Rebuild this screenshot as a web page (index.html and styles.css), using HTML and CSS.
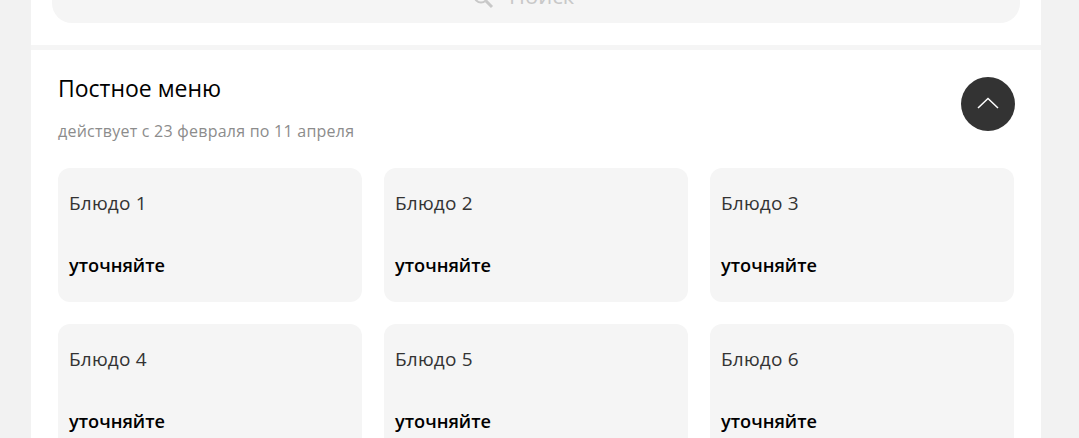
FILE: index.html
```html
<!DOCTYPE html>
<html lang="ru">
<head>
<meta charset="utf-8">
<title>Постное меню</title>
<link rel="stylesheet" href="styles.css">
</head>
<body>
<main class="page">
  <section class="search-panel">
    <div class="search">
      <svg class="search-icon" viewBox="0 0 22 22" width="22" height="22"><circle cx="9" cy="9" r="6.5" fill="none" stroke="#c8c8c8" stroke-width="2"/><path d="M14 14l6 6" stroke="#c8c8c8" stroke-width="3" fill="none"/></svg>
      <span class="search-text">Поиск</span>
    </div>
  </section>
  <section class="menu">
    <header class="menu-head">
      <div>
        <h2 class="menu-title">Постное меню</h2>
        <p class="menu-sub">действует с 23 февраля по 11 апреля</p>
      </div>
      <button class="toggle" type="button" aria-label="Свернуть">
        <svg viewBox="0 0 22 12" width="22" height="12"><path d="M1 11L11 1.5 21 11" fill="none" stroke="#fff" stroke-width="1.5"/></svg>
      </button>
    </header>
    <div class="grid">
      <article class="card"><div class="dish">Блюдо 1</div><div class="price">уточняйте</div></article>
      <article class="card"><div class="dish">Блюдо 2</div><div class="price">уточняйте</div></article>
      <article class="card"><div class="dish">Блюдо 3</div><div class="price">уточняйте</div></article>
      <article class="card"><div class="dish">Блюдо 4</div><div class="price">уточняйте</div></article>
      <article class="card"><div class="dish">Блюдо 5</div><div class="price">уточняйте</div></article>
      <article class="card"><div class="dish">Блюдо 6</div><div class="price">уточняйте</div></article>
    </div>
  </section>
</main>
</body>
</html>
```
FILE: styles.css
```css
* { box-sizing: border-box; }
html, body { margin: 0; height: 438px; overflow: hidden; }
body { background: #f2f2f2; font-family: "Open Sans", "Noto Sans", sans-serif; }
.page { width: 1010px; margin: 0 0 0 31px; background: #fff; height: 438px; overflow: hidden; }
.search-panel { height: 50px; padding: 0 21px; border-bottom: 5px solid #f5f5f5; }
.search { height: 23px; background: #f5f5f5; border-radius: 0 0 20px 20px; display: flex; justify-content: center; align-items: flex-end; gap: 15px; overflow: hidden; padding: 0 26px 15px 0; }
.search-icon { flex: none; margin-bottom: -1px; }
.search-text { font-size: 22px; line-height: 27px; color: #c8c8c8; margin-bottom: -1px; }
.menu { padding: 27px 26px 0 27px; }
.menu-head { display: flex; justify-content: space-between; height: 91px; }
.menu-title { margin: -1px 0 0; font-size: 23px; font-weight: 400; line-height: 24px; color: #000; }
.menu-sub { margin: 20px 0 0; font-size: 16px; line-height: 22px; letter-spacing: 0.24px; color: #8c8c8c; }
.toggle { width: 54px; height: 54px; padding: 0 0 2px; border: 0; border-radius: 50%; background: #333; display: flex; align-items: center; justify-content: center; }
.grid { display: grid; grid-template-columns: repeat(3, 304px); column-gap: 22px; row-gap: 22px; }
.card { height: 134px; padding: 23px 11px 0; background: #f5f5f5; border-radius: 12px; }
.dish { font-size: 19px; line-height: 24px; letter-spacing: 0.2px; color: #333; }
.price { margin-top: 38px; font-size: 18.2px; line-height: 24px; font-weight: 600; color: #000; }
```
